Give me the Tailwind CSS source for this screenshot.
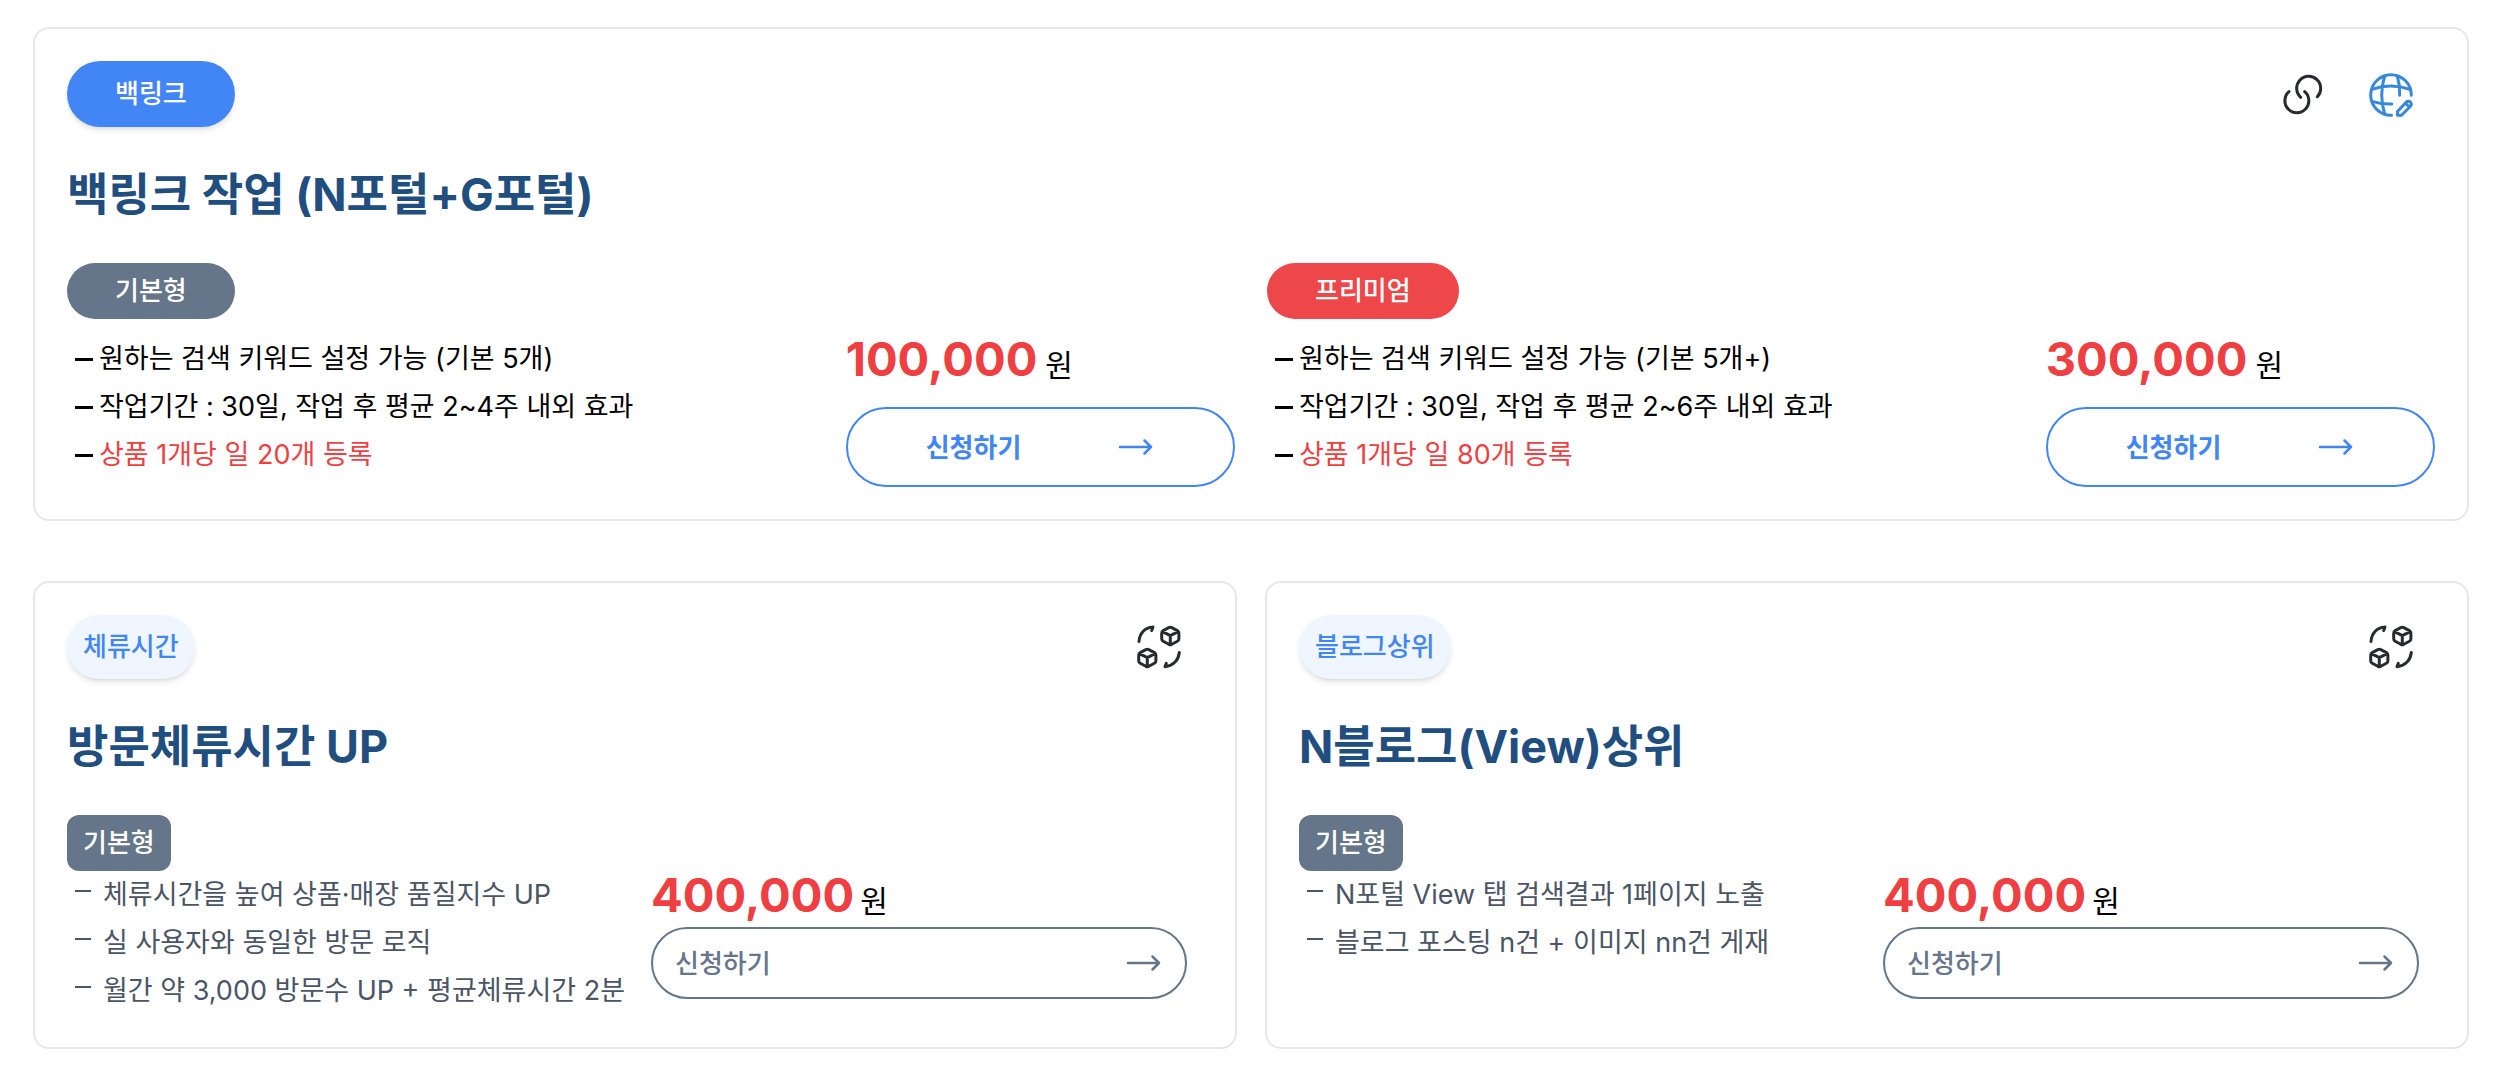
<!DOCTYPE html>
<html lang="ko">
<head>
    <meta charset="UTF-8">
    <meta name="viewport" content="width=device-width, initial-scale=1.0">
    <title>상품 안내</title>
    <script src="https://cdn.jsdelivr.net/npm/@tailwindcss/browser@4"></script>
</head>
<body class="bg-white text-black font-['Inter','Noto_Sans_CJK_KR',sans-serif]">
    <!-- shared icons -->
    <svg class="hidden" xmlns="http://www.w3.org/2000/svg">
        <symbol id="arrow" viewBox="0 0 40 40">
            <path d="M5 20h31M29.500 13.500l6.500 6.500-6.500 6.500" fill="none" stroke="currentColor" stroke-width="2.500" stroke-linecap="round" stroke-linejoin="round" />
        </symbol>
        <symbol id="boxes" viewBox="0 0 48 48">
            <g fill="none" stroke="currentColor" stroke-width="3" stroke-linecap="round" stroke-linejoin="round">
                <path d="M33.800 4.600 28.200 7.600Q26.700 8.500 26.700 10.200V15.800Q26.700 17.500 28.200 18.300L33.800 21.300Q35.300 22 36.800 21.300L42.400 18.300Q43.900 17.500 43.900 15.800V10.200Q43.900 8.500 42.400 7.600L36.800 4.600Q35.300 3.900 33.800 4.600ZM27.500 8.700 35.300 12.700 43.100 8.700M35.300 12.700V21.300" />
                <path d="M10.800 26.600 5.200 29.600Q3.700 30.500 3.700 32.200V37.800Q3.700 39.500 5.200 40.300L10.800 43.300Q12.300 44 13.800 43.300L19.400 40.300Q20.900 39.500 20.900 37.800V32.200Q20.900 30.500 19.400 29.600L13.800 26.600Q12.300 25.900 10.800 26.600ZM4.500 30.700 12.300 34.700 20.100 30.700M12.300 34.700V43.300" />
                <path d="M4 18.500C4.500 10.500 9.500 4.500 18 4L16.700 7.500" />
                <path d="M44.300 29.500C43.500 37 38.500 42.800 30 43.700L31.300 40.300" />
            </g>
        </symbol>
    </svg>

    <main class="pl-[33px] pr-[27px] pt-[27px]">
        <section class="border-2 border-gray-200 rounded-2xl p-8">
            <div class="flex justify-between items-center">
                <span class="px-12 rounded-full bg-[#4285f5] text-white text-[26px] leading-[66px] font-medium shadow-md">백링크</span>
                <div class="flex">
                    <svg class="w-12 h-12 mx-5 text-[#272b30]" viewBox="0 0 48 48" fill="none" stroke="currentColor" stroke-width="3" stroke-linecap="round">
                        <path d="M21.700 27.300A12 12 0 1 1 38.300 26.700M10 21.700A12 12 0 1 0 25.700 21.700" />
                    </svg>
                    <svg class="w-12 h-12 mx-5 text-[#3788dc]" viewBox="0 0 48 48" fill="none" stroke="currentColor" stroke-width="3" stroke-linecap="round" stroke-linejoin="round">
                        <path d="M44.300 25.300A20.300 20.300 0 1 0 24.500 45.300" />
                        <path d="M17.700 6Q11.700 25 17.700 44M30.300 6Q33 15 32.700 25.300M5 19.300Q24 12.500 43.300 19.500M5 31.300Q14 34.300 24.700 34" />
                        <path d="M30.500 45.200V41.500L39.200 32.200Q41.200 30.300 43.300 32Q45.300 34 43.500 36.200L34.500 45.200ZM38.700 33.500 42.300 37" />
                    </svg>
                </div>
            </div>
            <h2 class="my-12 text-[45px] leading-10 font-bold text-[#1f4e7f]">백링크 작업 (N포털+G포털)</h2>

            <div class="grid grid-cols-2 gap-8">
                <article>
                    <h3 class="w-fit px-12 rounded-full bg-[#65758a] text-white text-[26px] leading-[56px] font-medium">기본형</h3>
                    <div class="mt-4 flex">
                        <ul class="w-2/3 pl-2 text-[27px] leading-[48px]">
                            <li class="flex items-center gap-1.5"><span class="w-[18px] h-[3px] bg-black"></span>원하는 검색 키워드 설정 가능 (기본 5개)</li>
                            <li class="flex items-center gap-1.5"><span class="w-[18px] h-[3px] bg-black"></span>작업기간 : 30일, 작업 후 평균 2~4주 내외 효과</li>
                            <li class="flex items-center gap-1.5 text-[#ee3f43]"><span class="w-[18px] h-[3px] bg-black"></span>상품 1개당 일 20개 등록</li>
                        </ul>
                        <div class="w-1/3">
                            <p class="h-12 mb-6 flex items-baseline gap-2 text-[30px] leading-[48px]"><strong class="text-[47px] font-bold text-[#ee3f43]">100,000</strong> 원</p>
                            <button type="button" class="w-full h-20 px-[78px] flex items-center justify-between border-2 border-[#4285f5] rounded-full text-[#4285f5] text-[26px] font-semibold">
                                신청하기
                                <svg class="w-10 h-10"><use href="#arrow" /></svg>
                            </button>
                        </div>
                    </div>
                </article>

                <article>
                    <h3 class="w-fit px-12 rounded-full bg-[#ed474a] text-white text-[26px] leading-[56px] font-medium">프리미엄</h3>
                    <div class="mt-4 flex">
                        <ul class="w-2/3 pl-2 text-[27px] leading-[48px]">
                            <li class="flex items-center gap-1.5"><span class="w-[18px] h-[3px] bg-black"></span>원하는 검색 키워드 설정 가능 (기본 5개+)</li>
                            <li class="flex items-center gap-1.5"><span class="w-[18px] h-[3px] bg-black"></span>작업기간 : 30일, 작업 후 평균 2~6주 내외 효과</li>
                            <li class="flex items-center gap-1.5 text-[#ee3f43]"><span class="w-[18px] h-[3px] bg-black"></span>상품 1개당 일 80개 등록</li>
                        </ul>
                        <div class="w-1/3">
                            <p class="h-12 mb-6 flex items-baseline gap-2 text-[30px] leading-[48px]"><strong class="text-[47px] font-bold text-[#ee3f43]">300,000</strong> 원</p>
                            <button type="button" class="w-full h-20 px-[78px] flex items-center justify-between border-2 border-[#4285f5] rounded-full text-[#4285f5] text-[26px] font-semibold">
                                신청하기
                                <svg class="w-10 h-10"><use href="#arrow" /></svg>
                            </button>
                        </div>
                    </div>
                </article>
            </div>
        </section>

        <div class="mt-[60px] grid grid-cols-2 gap-7">
            <section class="border-2 border-gray-200 rounded-2xl p-8">
                <div class="flex justify-between items-center">
                    <span class="px-4 rounded-full bg-blue-50 text-[#4285f5] text-[26px] leading-[64px] font-medium shadow-md">체류시간</span>
                    <svg class="w-12 h-12 mx-5 text-[#272b30]"><use href="#boxes" /></svg>
                </div>
                <h2 class="my-12 text-[45px] leading-10 font-bold text-[#1f4e7f]">방문체류시간 UP</h2>
                <h3 class="w-fit px-4 rounded-xl bg-[#65758a] text-white text-[26px] leading-[56px] font-medium">기본형</h3>
                <div class="grid grid-cols-2">
                    <ul class="pl-2 text-[27px] leading-[48px] text-gray-600 whitespace-nowrap">
                        <li class="flex items-center gap-3"><span class="w-4 h-0.5 mb-2 bg-gray-600"></span>체류시간을 높여 상품·매장 품질지수 UP</li>
                        <li class="flex items-center gap-3"><span class="w-4 h-0.5 mb-2 bg-gray-600"></span>실 사용자와 동일한 방문 로직</li>
                        <li class="flex items-center gap-3"><span class="w-4 h-0.5 mb-2 bg-gray-600"></span>월간 약 3,000 방문수 UP + 평균체류시간 2분</li>
                    </ul>
                    <div class="px-4 pb-4">
                        <p class="h-12 mb-2 flex items-baseline gap-1.5 text-[30px] leading-[48px]"><strong class="text-[47px] font-bold text-[#ee3f43]">400,000</strong> 원</p>
                        <button type="button" class="w-full h-[72px] px-[22px] flex items-center justify-between border-2 border-[#65758a] rounded-full text-[#65758a] text-[26px] font-medium">
                            신청하기
                            <svg class="w-10 h-10"><use href="#arrow" /></svg>
                        </button>
                    </div>
                </div>
            </section>

            <section class="border-2 border-gray-200 rounded-2xl p-8">
                <div class="flex justify-between items-center">
                    <span class="px-4 rounded-full bg-blue-50 text-[#4285f5] text-[26px] leading-[64px] font-medium shadow-md">블로그상위</span>
                    <svg class="w-12 h-12 mx-5 text-[#272b30]"><use href="#boxes" /></svg>
                </div>
                <h2 class="my-12 text-[45px] leading-10 font-bold text-[#1f4e7f]">N블로그(View)상위</h2>
                <h3 class="w-fit px-4 rounded-xl bg-[#65758a] text-white text-[26px] leading-[56px] font-medium">기본형</h3>
                <div class="grid grid-cols-2">
                    <ul class="pl-2 text-[27px] leading-[48px] text-gray-600 whitespace-nowrap">
                        <li class="flex items-center gap-3"><span class="w-4 h-0.5 mb-2 bg-gray-600"></span>N포털 View 탭 검색결과 1페이지 노출</li>
                        <li class="flex items-center gap-3"><span class="w-4 h-0.5 mb-2 bg-gray-600"></span>블로그 포스팅 n건 + 이미지 nn건 게재</li>
                    </ul>
                    <div class="px-4 pb-4">
                        <p class="h-12 mb-2 flex items-baseline gap-1.5 text-[30px] leading-[48px]"><strong class="text-[47px] font-bold text-[#ee3f43]">400,000</strong> 원</p>
                        <button type="button" class="w-full h-[72px] px-[22px] flex items-center justify-between border-2 border-[#65758a] rounded-full text-[#65758a] text-[26px] font-medium">
                            신청하기
                            <svg class="w-10 h-10"><use href="#arrow" /></svg>
                        </button>
                    </div>
                </div>
            </section>
        </div>
    </main>
</body>
</html>
